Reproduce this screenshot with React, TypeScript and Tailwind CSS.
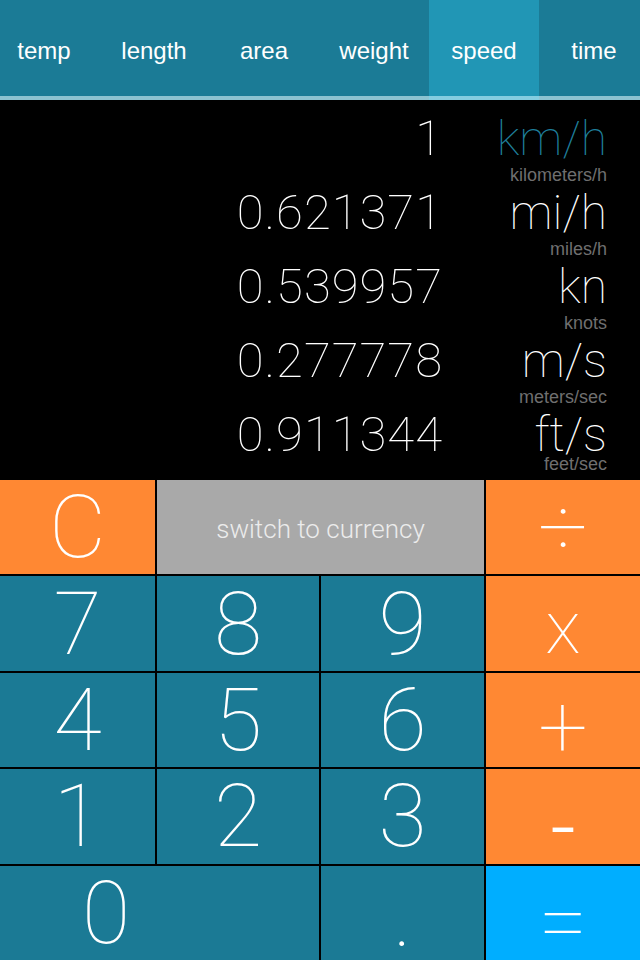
import {FC} from "react";

const tabs = ["temp", "length", "area", "weight", "speed", "time"];

const rows = [
    {value: "1", unit: "km/h", name: "kilometers/h", active: true},
    {value: "0.621371", unit: "mi/h", name: "miles/h"},
    {value: "0.539957", unit: "kn", name: "knots"},
    {value: "0.277778", unit: "m/s", name: "meters/sec"},
    {value: "0.911344", unit: "ft/s", name: "feet/sec"},
];

const thin = {fontFamily: "Roboto, 'Helvetica Neue', sans-serif"};

const Key: FC<{label: string; className: string; textClass?: string}> = ({label, className, textClass = ""}) => (
    <div className={`flex items-center justify-center ${className}`}>
        <span className={`text-white font-thin text-[88px] leading-[88px] ${textClass}`}>{label}</span>
    </div>
);

const App: FC = () => {
    return (
        <div className="w-[640px] h-[960px] overflow-hidden bg-black flex flex-col">
            {/* unit category tabs */}
            <div className="h-[100px] flex flex-col bg-[#1b7b96]">
                <div className="h-[96px] flex -ml-[11px]">
                    {tabs.map((t) => (
                        <div
                            key={t}
                            className={`w-[110px] shrink-0 flex items-center justify-center pt-[5px] text-white text-[24px] font-['Liberation_Sans',Arial,sans-serif] ${t === "speed" ? "bg-[#2196b5]" : ""}`}
                        >
                            {t}
                        </div>
                    ))}
                </div>
                <div className="h-[4px] flex -ml-[11px]">
                    {tabs.map((t) => (
                        <div key={t} className={`w-[110px] shrink-0 ${t === "speed" ? "bg-[#84cde0]" : "bg-[#8dc3d1]"}`}/>
                    ))}
                </div>
            </div>

            {/* conversion results */}
            <div className="h-[380px] pt-[15px] flex flex-col" style={thin}>
                {rows.map((r, i) => (
                    <div key={r.unit} className={`${i === 4 ? "h-[64px]" : "h-[74px]"} flex flex-col pr-[33px]`}>
                        <div className="flex justify-end items-start">
                            <div className="text-white font-thin text-[49px] leading-[48px] tracking-[1px] text-right">{r.value}</div>
                            <div className={`w-[164px] text-right font-thin text-[48px] leading-[48px] ${r.active ? "text-[#1f7f9b]" : "text-white"}`}>
                                {r.unit}
                            </div>
                        </div>
                        <div className={`self-end text-right text-[18px] leading-[18px] text-[#6f6f6f] font-['Liberation_Sans',Arial,sans-serif] ${i === 4 ? "-mt-[4px]" : "mt-[3px]"}`}>
                            {r.name}
                        </div>
                    </div>
                ))}
            </div>

            {/* keypad */}
            <div className="h-[480px] grid grid-cols-[155px_162px_163px_154px] grid-rows-5 gap-[2px] bg-black" style={thin}>
                <Key label="C" className="bg-[#ff8833]"/>
                <div className="col-span-2 flex items-center justify-center pt-[4px] bg-[#a9a9a9] text-[#ececec] text-[26px] font-light">
                    switch to currency
                </div>
                <Key label="÷" className="bg-[#ff8833]"/>

                <Key label="7" className="bg-[#1b7a95]"/>
                <Key label="8" className="bg-[#1b7a95]"/>
                <Key label="9" className="bg-[#1b7a95]"/>
                <Key label="x" className="bg-[#ff8833]" textClass="!text-[74px] translate-y-[4px]"/>

                <Key label="4" className="bg-[#1b7a95]"/>
                <Key label="5" className="bg-[#1b7a95]"/>
                <Key label="6" className="bg-[#1b7a95]"/>
                <Key label="+" className="bg-[#ff8833]" textClass="translate-y-[7px]"/>

                <Key label="1" className="bg-[#1b7a95]"/>
                <Key label="2" className="bg-[#1b7a95]"/>
                <Key label="3" className="bg-[#1b7a95]"/>
                <Key label="-" className="bg-[#ff8833]" textClass="!font-light translate-y-[11px]"/>

                <div className="col-span-2 flex items-center bg-[#1b7a95] pl-[82px]">
                    <span className="text-white font-thin text-[88px] leading-[88px]">0</span>
                </div>
                <Key label="." className="bg-[#1b7a95]" textClass="translate-y-[3px]"/>
                <Key label="=" className="bg-[#00aeff]" textClass="translate-y-[9px]"/>
            </div>
        </div>
    );
};

export default App;
